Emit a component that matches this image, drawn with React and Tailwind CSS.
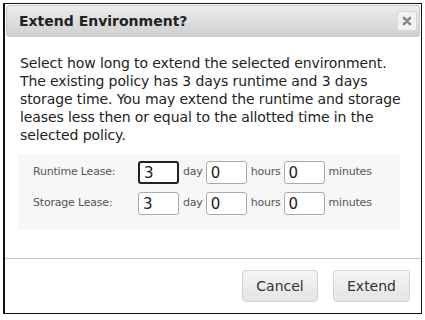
export default function App() {
  const rows = [
    { label: "Runtime Lease:", days: "3", hours: "0", minutes: "0", focus: true },
    { label: "Storage Lease:", days: "3", hours: "0", minutes: "0" },
  ]

  return (
    <div className="w-[425px] h-[320px] bg-white p-[3px] font-['DejaVu_Sans',sans-serif]">
      <div className="w-[419px] h-[311px] border border-[#111] border-l-2 flex flex-col bg-white">
        <div className="h-[32px] mx-[1px] mt-[1px] rounded-[3px] border border-[#c8c8c8] bg-gradient-to-b from-[#ececec] to-[#d0d0d0] flex items-center justify-between pl-[12px] pr-[2px]">
          <h1 className="text-[14px] font-bold text-[#222]">Extend Environment?</h1>
          <button className="w-[20px] h-[20px] rounded-[3px] bg-[#f2f2f2] border border-[#d8d8d8] flex items-center justify-center">
            <svg width="10" height="10" viewBox="0 0 10 10">
              <path d="M2 2 L8 8 M8 2 L2 8" stroke="#888" strokeWidth="2.6" strokeLinecap="round" />
            </svg>
          </button>
        </div>

        <div className="pl-[15px] pr-[6px] pt-[17px]">
          <p className="text-[14px] leading-[18px] text-[#222] tracking-[-0.1px]">
            Select how long to extend the selected environment. The existing policy has 3 days runtime and 3 days storage time. You may extend the runtime and storage leases less then or equal to the allotted time in the selected policy.
          </p>
          <div className="mt-[10px] w-[382px] h-[76px] bg-[#f7f7f7] ml-[-2px] pl-[15px] pt-[7px] flex flex-col gap-[8px]">
            {rows.map((r) => (
              <div key={r.label} className="flex items-center text-[11px] text-[#555] tracking-[-0.2px]">
                <span className="w-[105px]">{r.label}</span>
                <input
                  readOnly
                  value={r.days}
                  className={
                    "w-[41px] h-[23px] rounded-[3px] bg-white px-[4px] text-[15px] text-[#222] outline-none " +
                    (r.focus ? "border-2 border-[#222]" : "border border-[#aaa]")
                  }
                />
                <span className="ml-[4px] mr-[3px]">day</span>
                <input
                  readOnly
                  value={r.hours}
                  className="w-[41px] h-[23px] rounded-[3px] border border-[#aaa] bg-white px-[4px] text-[15px] text-[#222] outline-none"
                />
                <span className="ml-[4px] mr-[3px]">hours</span>
                <input
                  readOnly
                  value={r.minutes}
                  className="w-[41px] h-[23px] rounded-[3px] border border-[#aaa] bg-white px-[4px] text-[15px] text-[#222] outline-none"
                />
                <span className="ml-[4px]">minutes</span>
              </div>
            ))}
          </div>
        </div>

        <div className="mt-auto border-t border-[#c4c4c4] h-[55px] flex items-center justify-end gap-[15px] pr-[11px]">
          <button className="w-[76px] h-[32px] rounded-[4px] border border-[#d4d4d4] bg-gradient-to-b from-[#f4f4f4] to-[#e4e4e4] text-[14px] text-[#333]">
            Cancel
          </button>
          <button className="w-[77px] h-[32px] rounded-[4px] border border-[#d4d4d4] bg-gradient-to-b from-[#f4f4f4] to-[#e4e4e4] text-[14px] text-[#333]">
            Extend
          </button>
        </div>
      </div>
    </div>
  )
}
